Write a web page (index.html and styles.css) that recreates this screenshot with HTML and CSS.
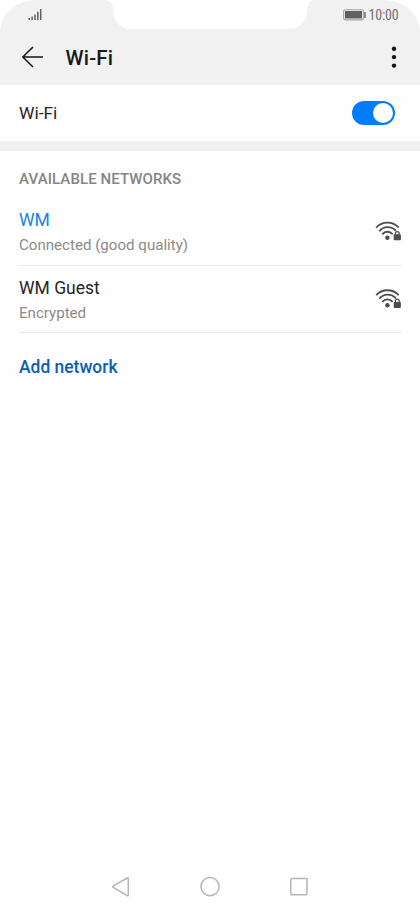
FILE: index.html
```html
<!DOCTYPE html>
<html lang="en">
<head>
<meta charset="utf-8">
<title>Wi-Fi</title>
<link rel="stylesheet" href="styles.css">
</head>
<body>
<div class="phone">
  <header class="top">
    <svg class="notch" width="420" height="36" viewBox="0 0 420 36"><path d="M0 0H38C16 0 0 13 0 34ZM420 0H382C404 0 420 13 420 34ZM104 0C110 0 113 3 113 10C113 21 120 29 132 29H288C300 29 307 21 307 10C307 3 310 0 316 0Z"/></svg>
    <div class="status">
      <svg width="14" height="13" viewBox="0 0 14 13"><path d="M1.2 10v2M4.1 8.5V12M7 6.4V12M9.8 3.8V12M12.7 1v11" stroke="#606060" stroke-width="1.5"/></svg>
      <div class="power">
        <svg width="23" height="12" viewBox="0 0 23 12"><rect x=".6" y=".7" width="19.8" height="10.2" rx="1.7" fill="#ececec" stroke="#a5a5a5" stroke-width="1.1"/><rect x="2" y="2" width="17" height="7.5" fill="#606060"/><path d="M22 3v6" stroke="#777" stroke-width="1.6"/></svg>
        <span class="clock">10:00</span>
      </div>
    </div>
    <div class="bar">
      <svg width="22" height="22" viewBox="0 0 22 22"><path d="M11 1L.8 11l10.2 10M1 11H21" fill="none" stroke="#151515" stroke-width="1.6"/></svg>
      <h1>Wi-Fi</h1>
      <svg class="more" width="6" height="22" viewBox="0 0 6 22"><circle cx="3" cy="2.7" r="2.2"/><circle cx="3" cy="11.1" r="2.2"/><circle cx="3" cy="19.6" r="2.2"/></svg>
    </div>
  </header>
  <section class="switch-row"><span>Wi-Fi</span><span class="toggle"><span class="knob"></span></span></section>
  <main>
    <h2>AVAILABLE NETWORKS</h2>
    <div class="network">
      <div class="info"><div class="name active">WM</div><div class="detail">Connected (good quality)</div></div>
      <svg class="wifi" width="26" height="22" viewBox="0 0 26 22"><path class="waves" d="M1.2 7.6C7.2 1 17.7 1 23.7 7.6M4.2 11.2C8.6 5.8 16.4 5.8 20.9 10.8M7.3 14.4C10 10.9 14.8 10.9 17.6 14.3"/><circle cx="12.4" cy="17.7" r="2.2"/><rect x="18.7" y="14.3" width="7.2" height="6" rx=".8"/><path class="shackle" d="M20.4 14.8v-1.3a1.9 1.9 0 0 1 3.8 0v1.3"/></svg>
    </div>
    <div class="network second">
      <div class="info"><div class="name">WM Guest</div><div class="detail">Encrypted</div></div>
      <svg class="wifi" width="26" height="22" viewBox="0 0 26 22"><path class="waves" d="M1.2 7.2C7.2 .6 17.7 .6 23.7 7.2M4.2 10.8C8.6 5.4 16.4 5.4 20.9 10.4M7.3 14C10 10.5 14.8 10.5 17.6 13.9"/><circle cx="12.4" cy="17.3" r="2.2"/><rect x="18.7" y="13.9" width="7.2" height="6" rx=".8"/><path class="shackle" d="M20.4 14.4v-1.3a1.9 1.9 0 0 1 3.8 0v1.3"/></svg>
    </div>
    <div class="add">Add network</div>
  </main>
  <nav>
    <svg width="20" height="22" viewBox="0 0 20 22"><path d="M16.3 2L2.3 9.8q-1.3.8 0 1.6l14 8.2q1 .5 1-.8V2.6q0-1.1-1-.6Z"/></svg>
    <svg width="20" height="22" viewBox="0 0 20 22"><circle cx="10" cy="10.6" r="9.1"/></svg>
    <svg width="20" height="22" viewBox="0 0 20 22"><rect x="1.8" y="2.5" width="16.2" height="16.2" rx=".7"/></svg>
  </nav>
</div>
</body>
</html>
```

FILE: styles.css
```css
* { box-sizing: border-box; }
body { margin: 0; background: #fff; font-family: Roboto, "Liberation Sans", sans-serif; }
svg { display: block; flex: none; }
.phone { width: 420px; height: 910px; display: flex; flex-direction: column; background: #fefefe; }
.top { position: relative; height: 85px; background: #f1f1f1; }
.notch { position: absolute; top: 0; left: 0; fill: #fff; }
.status { position: relative; height: 29px; padding: 0 21px 0 28px; display: flex; align-items: center; justify-content: space-between; }
.power { display: flex; align-items: center; gap: 2.5px; }
.clock { width: 31px; font-family: "Roboto Condensed", Roboto, sans-serif; font-size: 14px; line-height: 16px; letter-spacing: -.2px; text-align: center; color: #707070; }
.bar { height: 56px; padding: 0 23px 0 22px; display: flex; align-items: center; }
h1 { margin: 2px 0 0 21.5px; font-size: 20.5px; line-height: 26px; font-weight: 500; color: #181818; letter-spacing: .2px; }
.more { margin-left: auto; fill: #151515; }
.switch-row { height: 66px; padding: 0 25px 0 19px; display: flex; align-items: center; justify-content: space-between; border-bottom: 10px solid #f1f1f1; font-size: 17.4px; color: #252525; }
.toggle { width: 43px; height: 24px; border-radius: 12px; background: #007dff; display: flex; align-items: center; justify-content: flex-end; padding-right: 2px; }
.knob { width: 20px; height: 20px; border-radius: 50%; background: #fff; }
main { flex: 1; padding: 18px 19px 0; }
h2 { margin: 0; font-size: 15px; line-height: 20px; font-weight: 500; color: #858585; letter-spacing: .09px; }
.network { height: 77px; padding: 19px 0 0; border-bottom: 1px solid #e9e9e9; display: flex; justify-content: space-between; }
.second { height: 67px; padding-top: 10px; }
.name { font-size: 17.5px; line-height: 24px; color: #252525; }
.active { color: #1683ea; }
.detail { font-size: 15.1px; line-height: 20px; margin-top: 3px; color: #8b8b8b; }
.wifi { margin-top: 12px; fill: #4d4d4d; }
.waves, .shackle { fill: none; stroke: #4d4d4d; stroke-width: 1.8; }
.shackle { stroke-width: 1.3; }
.add { margin-top: 22px; font-size: 17.45px; line-height: 24px; font-weight: 500; color: #0a5fb4; }
nav { height: 46px; padding: 12px 111px 0 110px; display: flex; justify-content: space-between; }
nav svg { fill: none; stroke: #b5b5b5; stroke-width: 1.5; }
nav svg:first-child { margin-left: .5px; margin-right: -.5px; }
```
